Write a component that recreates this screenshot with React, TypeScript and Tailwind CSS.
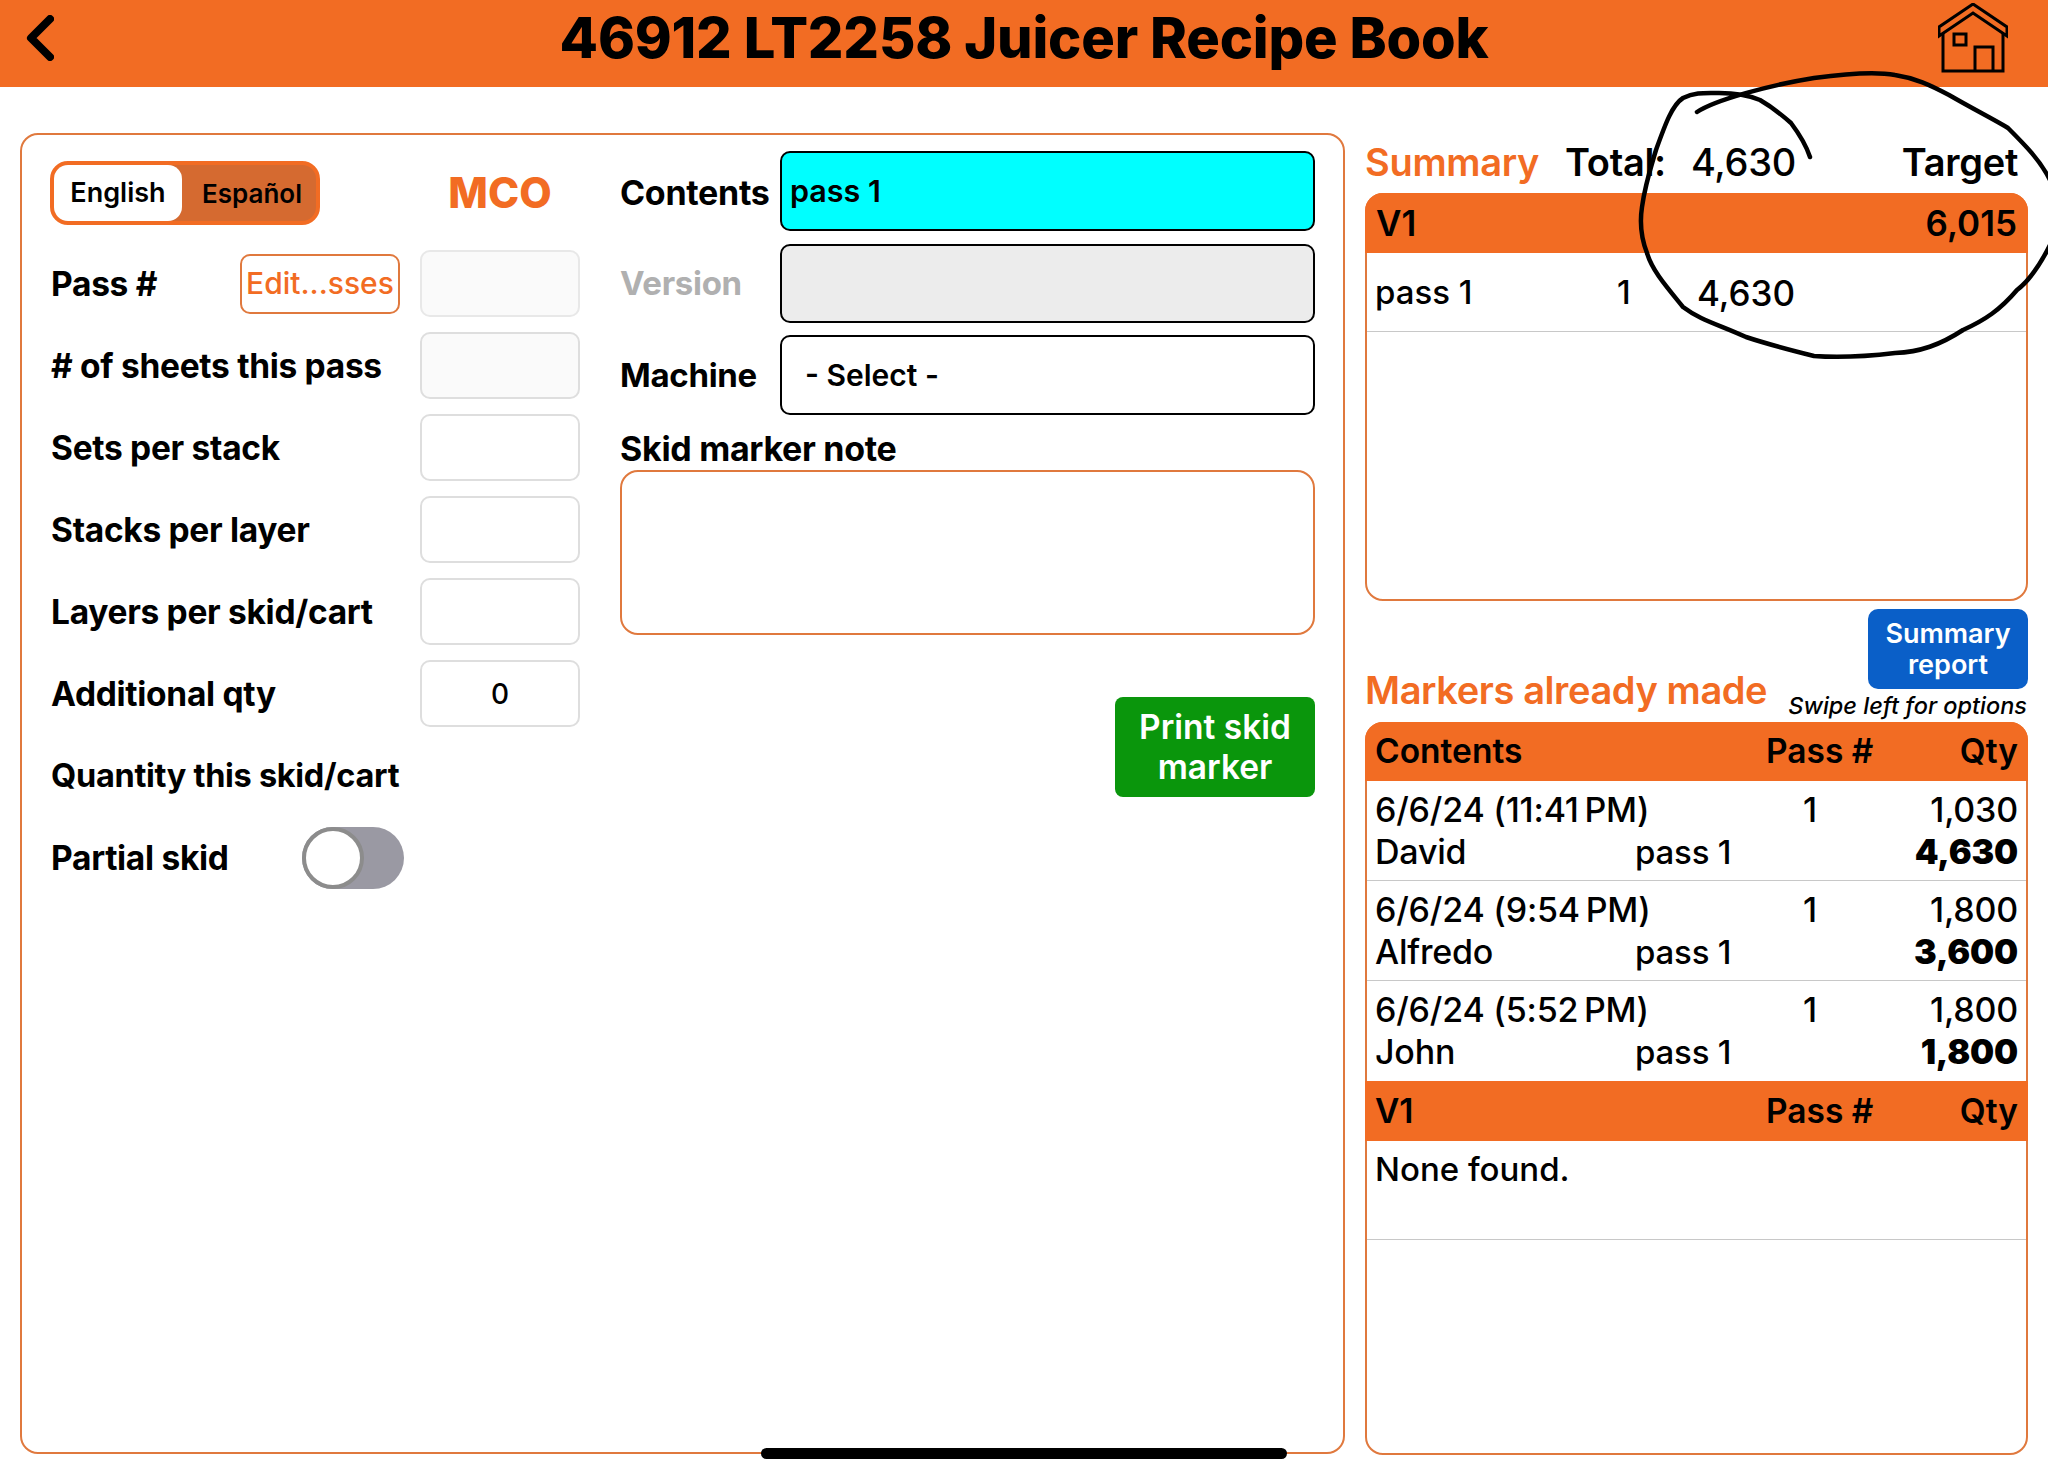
import React from 'react';

const SideRow = ({ label, value, dim }: { label: string; value?: string; dim?: boolean }) => (
  <div className="flex h-[67px] items-center justify-between">
    <span className="pl-[1px] pt-[2px] text-[33.5px] font-bold tracking-[-0.3px]">{label}</span>
    <div className={`flex h-[67px] w-[160px] items-center justify-center rounded-[10px] border-2 border-[#dedede] text-[28px] font-medium ${dim ? 'bg-[#fafafa]' : 'bg-white'}`}>
      {value}
    </div>
  </div>
);

const markers = [
  { date: '6/6/24 (11:41\u2009PM)', qty: '1,030', name: 'David', total: '4,630' },
  { date: '6/6/24 (9:54\u2009PM)', qty: '1,800', name: 'Alfredo', total: '3,600' },
  { date: '6/6/24 (5:52\u2009PM)', qty: '1,800', name: 'John', total: '1,800' },
];

const gridCols = 'grid grid-cols-[260px_131px_103px_1fr]';

export default function App() {
  return (
    <div className="relative h-[1475px] w-[2048px] overflow-hidden bg-white font-['Inter',sans-serif] text-black">
      {/* Top bar */}
      <header className="grid h-[87px] grid-cols-[1fr_auto_1fr] items-center bg-[#f26c23] pb-[12px]">
        <svg className="ml-[26px]" width="28" height="46" viewBox="0 0 28 46" fill="none">
          <path d="M24 4 L5 23 L24 42" stroke="#000" strokeWidth="8" strokeLinecap="round" strokeLinejoin="round" />
        </svg>
        <h1 className="text-[56px] font-extrabold leading-none tracking-[-0.2px]">46912 LT2258 Juicer Recipe Book</h1>
        <svg className="mr-[40px] justify-self-end" width="70" height="70" viewBox="0 0 70 70" fill="none" stroke="#000" strokeWidth="3">
          <path d="M1 33 V24 L35 1 L69 24 V33 L35 10 Z" />
          <path d="M5 30 V68 H65 V30" />
          <path d="M16 31 H28 V42 H16 Z" />
          <path d="M37 68 V44 H55 V68" />
        </svg>
      </header>

      <main className="flex gap-[20px] pl-[20px] pt-[46px]">
        {/* Left card */}
        <section className="flex h-[1321px] w-[1325px] gap-[40px] rounded-[18px] border-2 border-[#e0793e] pl-[28px]">
          <div className="flex w-[530px] flex-col gap-[15px] pt-[26px]">
            <div className="mb-[10px] flex h-[64px] items-center justify-between">
              <div className="flex h-[64px] w-[270px] items-center rounded-[18px] border-[4px] border-[#f26c23] bg-[#d56a30] text-[27px] font-semibold">
                <div className="flex h-full w-[128px] items-center justify-center rounded-[14px] bg-white">English</div>
                <div className="flex-1 pl-[6px] text-center text-[26px]">Español</div>
              </div>
              <div className="w-[160px] text-center text-[42px] font-extrabold leading-none text-[#f26c23]">MCO</div>
            </div>
            <div className="flex h-[67px] items-center">
              <span className="w-[190px] pl-[1px] pt-[2px] text-[33.5px] font-bold tracking-[-0.3px]">Pass #</span>
              <button className="h-[60px] w-[160px] rounded-[10px] border-2 border-[#e0793e] text-[30px] font-medium text-[#f26c23]">Edit...sses</button>
              <div className="ml-auto h-[67px] w-[160px] rounded-[10px] border-2 border-[#e8e8e8] bg-[#fafafa]" />
            </div>
            <SideRow label="# of sheets this pass" dim />
            <SideRow label="Sets per stack" />
            <SideRow label="Stacks per layer" />
            <SideRow label="Layers per skid/cart" />
            <SideRow label="Additional qty" value="0" />
            <div className="flex h-[67px] items-center pl-[1px] pt-[2px] text-[32.5px] font-bold tracking-[-0.3px]">Quantity this skid/cart</div>
            <div className="flex h-[67px] items-center">
              <span className="w-[252px] pl-[1px] pt-[2px] text-[33.5px] font-bold tracking-[-0.3px]">Partial skid</span>
              <div className="flex h-[62px] w-[102px] items-center rounded-full bg-[#9a99a3]">
                <div className="h-[62px] w-[62px] rounded-full border-[4px] border-[#8c8c8c] bg-white" />
              </div>
            </div>
          </div>

          <div className="flex w-[695px] flex-col pt-[16px]">
            <div className="flex h-[80px] items-center">
              <span className="w-[160px] pt-[2px] text-[34px] font-bold tracking-[-0.3px]">Contents</span>
              <div className="flex h-full flex-1 items-center rounded-[10px] border-2 border-black bg-[#00ffff] pl-[8px] text-[30.5px] font-semibold">pass 1</div>
            </div>
            <div className="mt-[13px] flex h-[79px] items-center">
              <span className="w-[160px] text-[33px] font-bold tracking-[-0.3px] text-[#b0b0b0]">Version</span>
              <div className="h-full flex-1 rounded-[10px] border-2 border-black bg-[#ececec]" />
            </div>
            <div className="mt-[12px] flex h-[80px] items-center">
              <span className="w-[160px] pt-[2px] text-[33px] font-bold tracking-[-0.3px]">Machine</span>
              <div className="flex h-full flex-1 items-center rounded-[10px] border-2 border-black pl-[23px] text-[30px] font-semibold">- Select -</div>
            </div>
            <div className="mt-[13px] text-[34px] font-bold leading-[42px] tracking-[-0.3px]">Skid marker note</div>
            <div className="h-[165px] w-full rounded-[18px] border-2 border-[#e0793e]" />
            <button className="ml-auto mt-[62px] h-[100px] w-[200px] rounded-[8px] bg-[#0a960c] text-[33.5px] font-semibold leading-[40px] text-white">
              Print skid marker
            </button>
          </div>
        </section>

        {/* Right column */}
        <section className="flex w-[663px] flex-col">
          <div className="flex h-[60px] items-center pb-[2px] text-[38px] font-semibold tracking-[-0.3px]">
            <span className="w-[200px] text-[#f26c23]">Summary</span>
            <span className="w-[126px]">Total:</span>
            <span className="font-medium">4,630</span>
            <span className="ml-auto mr-[10px]">Target</span>
          </div>
          <div className="h-[408px] rounded-[18px] border-2 border-[#e0793e]">
            <div className="-mx-[2px] -mt-[2px] flex h-[60px] items-center justify-between rounded-t-[18px] bg-[#f26c23] px-[11px] text-[35px] font-semibold">
              <span>V1</span>
              <span>6,015</span>
            </div>
            <div className="flex h-[79px] items-center border-b border-[#c8c8c8] pl-[8px] pt-[2px] text-[33px] font-medium">
              <span className="w-[242px]">pass 1</span>
              <span className="w-[80px]">1</span>
              <span className="text-[35px]">4,630</span>
            </div>
          </div>

          <div className="flex h-[121px] items-end justify-between">
            <h2 className="pb-[13px] text-[38px] font-semibold leading-none tracking-[-0.4px] text-[#f26c23]">Markers already made</h2>
            <div className="flex flex-col items-end">
              <button className="h-[80px] w-[160px] rounded-[10px] bg-[#0a5fc8] text-[27px] font-semibold leading-[31px] text-white">
                Summary report
              </button>
              <span className="mb-[3px] mr-[1px] mt-[4px] whitespace-nowrap text-[23.5px] font-medium italic leading-[26px]">Swipe left for options</span>
            </div>
          </div>

          <div className="h-[733px] rounded-[18px] border-2 border-[#e0793e]">
            <div className={`${gridCols} -mx-[2px] -mt-[2px] h-[59px] items-center rounded-t-[18px] bg-[#f26c23] pl-[10px] pr-[10px] text-[33.5px] font-semibold`}>
              <span className="col-span-2">Contents</span>
              <span className="whitespace-nowrap">Pass #</span>
              <span className="text-right">Qty</span>
            </div>
            {markers.map((m, i) => (
              <div key={i} className={`${gridCols} h-[100px] content-center gap-y-[4px] pl-[8px] pr-[8px] text-[34px] font-medium leading-[38px] tracking-[-0.2px] ${i < 2 ? 'border-b border-[#c8c8c8]' : ''}`}>
                <span className="col-span-2">{m.date}</span>
                <span className="pl-[37px]">1</span>
                <span className="text-right">{m.qty}</span>
                <span>{m.name}</span>
                <span className="text-[33px]">pass 1</span>
                <span />
                <span className="text-right font-black">{m.total}</span>
              </div>
            ))}
            <div className={`${gridCols} -mx-[2px] h-[60px] items-center bg-[#f26c23] pl-[10px] pr-[10px] pt-[1px] text-[33.5px] font-semibold`}>
              <span className="col-span-2">V1</span>
              <span className="whitespace-nowrap">Pass #</span>
              <span className="text-right">Qty</span>
            </div>
            <div className="flex h-[99px] items-start border-b border-[#c8c8c8] pl-[8px] pt-[4px] text-[33px] font-medium">None found.</div>
          </div>
        </section>
      </main>

      {/* Pen annotation over the summary */}
      <svg className="pointer-events-none absolute left-0 top-0" width="2048" height="1475" fill="none">
        <path
          d="M1697 112 C1715 100 1770 85 1814 78 C1850 73 1880 72 1895 75 C1915 78 1930 85 1949 95 C1975 110 1995 120 2008 128 C2025 145 2040 160 2050 180 M2050 245 C2040 265 2030 280 2017 290 C2000 310 1985 320 1963 330 C1940 345 1920 352 1895 353 C1870 356 1840 358 1814 356 C1790 350 1770 345 1746 337 C1720 325 1700 320 1683 307 C1665 285 1652 270 1647 253 C1640 235 1640 220 1642 207 C1645 185 1650 170 1656 150 C1665 125 1672 105 1683 98 C1695 92 1705 93 1719 93 C1735 93 1748 95 1760 100 C1772 107 1782 115 1791 123 C1800 135 1806 145 1810 157"
          stroke="#000"
          strokeWidth="4.5"
          strokeLinecap="round"
        />
      </svg>

      {/* Home indicator */}
      <div className="absolute left-[761px] top-[1448px] h-[11px] w-[526px] rounded-full bg-black" />
    </div>
  );
}
